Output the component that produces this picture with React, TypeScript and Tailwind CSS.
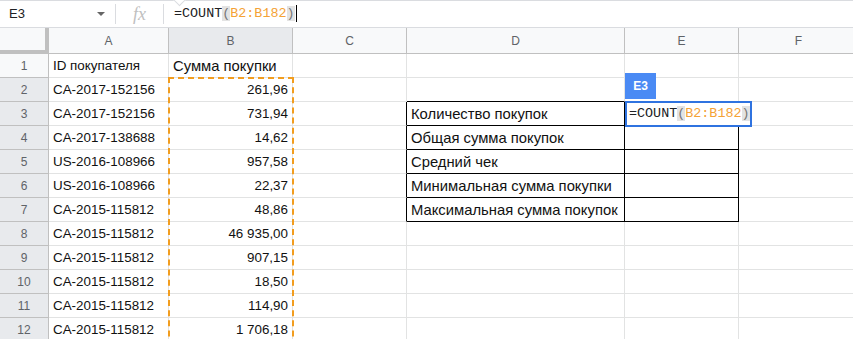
import React from "react";

const rows: [string, string][] = [
  ["ID покупателя", "Сумма покупки"],
  ["CA-2017-152156", "261,96"],
  ["CA-2017-152156", "731,94"],
  ["CA-2017-138688", "14,62"],
  ["US-2016-108966", "957,58"],
  ["US-2016-108966", "22,37"],
  ["CA-2015-115812", "48,86"],
  ["CA-2015-115812", "46 935,00"],
  ["CA-2015-115812", "907,15"],
  ["CA-2015-115812", "18,50"],
  ["CA-2015-115812", "114,90"],
  ["CA-2015-115812", "1 706,18"],
];

const labels: Record<number, string> = {
  3: "Количество покупок",
  4: "Общая сумма покупок",
  5: "Средний чек",
  6: "Минимальная сумма покупки",
  7: "Максимальная сумма покупок",
};

const cols = [
  { key: "A", w: "w-[120px]" },
  { key: "B", w: "w-[124px]" },
  { key: "C", w: "w-[114px]" },
  { key: "D", w: "w-[218px]" },
  { key: "E", w: "w-[114px]" },
  { key: "F", w: "w-[120px]" },
];

function inBox(r: number) {
  return r >= 3 && r <= 7;
}

function Formula() {
  return (
    <span className="font-['Liberation_Mono',monospace] text-[13.4px] text-[#202124] whitespace-nowrap">
      =COUNT<span className="bg-[#e3e3e3] text-[#777]">(</span>
      <span className="text-[#f4a236]">B2:B182</span>
      <span className="bg-[#e3e3e3] text-[#777]">)</span>
    </span>
  );
}

function Cell({
  col,
  r,
  big,
  children,
}: {
  col: number;
  r: number;
  big?: boolean;
  children?: React.ReactNode;
}) {
  const c = cols[col];
  // right edge black: C,D,E inside rows 3-7
  const rightBlack = inBox(r) && (c.key === "C" || c.key === "D" || c.key === "E");
  // bottom edge black: D,E rows 2-7
  const bottomBlack = r >= 2 && r <= 7 && (c.key === "D" || c.key === "E");
  return (
    <div
      className={[
        "h-full shrink-0 border-r border-b flex items-center pt-[2px] px-[4px] overflow-visible whitespace-nowrap",
        c.w,
        big ? "text-[14.8px]" : "",
        rightBlack ? "border-r-black" : "border-r-[#e2e3e3]",
        bottomBlack ? "border-b-black" : "border-b-[#e2e3e3]",
        c.key === "B" && r > 1 ? "justify-end" : "justify-start",
      ].join(" ")}
    >
      {children}
    </div>
  );
}

export default function App() {
  return (
    <div className="relative w-[853px] h-[339px] overflow-hidden bg-white font-['Liberation_Sans',Arial,sans-serif] text-[13.4px] text-[#111]">
      {/* formula bar */}
      <div className="flex h-[28px] items-center border-t border-b border-[#dadce0]">
        <div className="flex w-[115px] items-center justify-between pl-[9px] pr-[10px] text-[13px] text-[#202124]">
          <span>E3</span>
          <span className="h-0 w-0 border-x-[4px] border-t-[4px] border-x-transparent border-t-[#666]" />
        </div>
        <div className="h-[20px] w-px bg-[#dadce0]" />
        <div className="flex w-[47px] justify-center font-['Liberation_Serif',serif] text-[18px] italic text-[#c0c0c0]">
          fx
        </div>
        <div className="h-[20px] w-px bg-[#dadce0]" />
        <div className="flex items-center pl-[10px]">
          <Formula />
          <span className="ml-px h-[17px] w-px bg-black" />
        </div>
      </div>

      {/* column headers */}
      <div className="flex h-[26px] text-[12px] text-[#5f6368]">
        <div className="h-full w-[49px] shrink-0 border-r-4 border-b-4 border-[#c0c0c0] bg-[#f8f9fa]" />
        {cols.map((c) => (
          <div
            key={c.key}
            className={[
              "flex h-full shrink-0 items-center justify-center border-r border-b border-[#c0c0c0]",
              c.w,
              c.key === "B" ? "bg-[#e8eaed]" : "bg-[#f8f9fa]",
            ].join(" ")}
          >
            {c.key}
          </div>
        ))}
      </div>

      {/* rows */}
      {rows.map(([a, b], i) => {
        const r = i + 1;
        return (
          <div key={r} className="flex h-[24px]">
            <div
              className={[
                "flex h-full w-[49px] shrink-0 items-center justify-center border-r border-b border-[#c0c0c0] text-[12px] text-[#5f6368]",
                r > 1 ? "bg-[#e8eaed]" : "bg-[#f8f9fa]",
              ].join(" ")}
            >
              {r}
            </div>
            <Cell col={0} r={r}>{a}</Cell>
            <Cell col={1} r={r} big={r === 1}>{b}</Cell>
            <Cell col={2} r={r} />
            <Cell col={3} r={r} big>{labels[r]}</Cell>
            <Cell col={4} r={r} />
            <Cell col={5} r={r} />
          </div>
        );
      })}

      {/* range outline around B2:B182 */}
      <div className="pointer-events-none absolute left-[168px] top-[77px] h-[300px] w-[126px] border-2 border-dashed border-[#f29d1f]" />

      {/* tooltip notch at top of formula bar */}
      <div className="absolute left-[174px] top-[-7px] h-[11px] w-[11px] rotate-45 border-r border-b border-[#dadce0] bg-white" />

      {/* E3 badge */}
      <div className="absolute left-[625px] top-[73px] flex h-[26px] w-[31px] items-center justify-center bg-[#4a8af4] text-[12px] font-bold text-white">
        E3
      </div>

      {/* cell editor */}
      <div className="absolute left-[625px] top-[101px] flex h-[26px] w-[127px] items-center border-2 border-[#2f73e0] bg-white pl-[2px] pt-px">
        <Formula />
      </div>
    </div>
  );
}
